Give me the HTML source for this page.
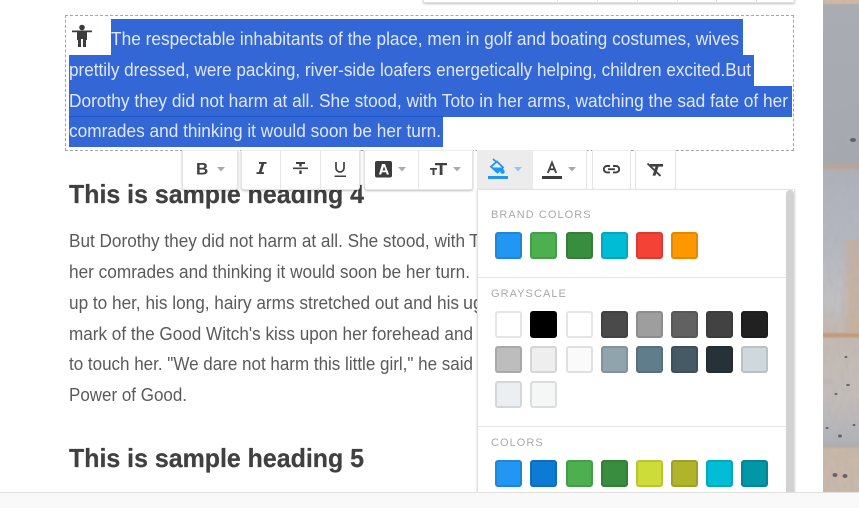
<!DOCTYPE html>
<html><head><meta charset="utf-8"><style>
html,body{margin:0;padding:0;background:#fff;width:859px;height:508px;overflow:hidden;font-family:"Liberation Sans",sans-serif}
.a{position:absolute;box-sizing:border-box}
svg.page{position:absolute;left:0;top:0}
.g{position:absolute;top:150px;height:40px;background:#fff;border:1px solid #e4e4e4;border-top-color:#eee;border-radius:0 0 3px 3px;box-sizing:border-box}
.sh{box-shadow:0 1px 2px rgba(0,0,0,.25)}
.s{position:absolute;width:27px;height:27px;border-radius:3px;box-sizing:border-box;border:2px solid rgba(0,0,0,.1)}
.l{position:absolute;left:491px;font-size:11px;letter-spacing:1.05px;color:#a9a9a9;line-height:12px}
.d{position:absolute;width:1px;top:151px;height:38px;background:#e6e6e6}
</style></head><body>
<div class="a" style="left:823px;top:0;width:36px;height:492px;background:linear-gradient(180deg,#d1b8a3 0,#d1b8a3 3px,#a9acb3 5px,#a6a8af 163px,#bba594 165px,#bba594 168px,#afb1ba 171px,#b6b8c1 250px,#c0bfc2 300px,#c4b8ae 332px,#c49a78 334px,#c49a78 336px,#c4bab2 339px,#c3bcb8 400px,#b2b3b8 440px,#b0aca8 446px,#c9b7a7 449px,#cab8a8 492px)"></div>
<div class="a" style="left:823px;top:240px;width:36px;height:94px;background:linear-gradient(90deg,rgba(205,170,140,0) 50%,rgba(205,170,140,.55) 75%,rgba(205,170,140,.6))"></div>
<svg class="page" width="859" height="492" style="left:0;top:0" xmlns="http://www.w3.org/2000/svg">
<filter id="n" x="0" y="0" width="100%" height="100%"><feTurbulence type="fractalNoise" baseFrequency="0.22 0.09" numOctaves="3" seed="4"/><feColorMatrix values="0 0 0 0 .4 0 0 0 0 .41 0 0 0 0 .45 0 0 0 .5 -.17"/></filter>
<rect x="823" y="0" width="36" height="492" filter="url(#n)"/>
<g fill="#4a484f" opacity=".75">
<ellipse cx="853" cy="140" rx="3" ry="2"/><ellipse cx="835" cy="475" rx="2.500" ry="2"/><ellipse cx="845" cy="476" rx="2.500" ry="2"/>
<ellipse cx="840" cy="436" rx="2" ry="1.500"/><ellipse cx="848" cy="385" rx="2" ry="1"/><ellipse cx="846" cy="357" rx="1.500" ry="1"/><ellipse cx="854" cy="425" rx="1.500" ry="1"/><ellipse cx="827" cy="428" rx="1.500" ry="1"/><ellipse cx="836" cy="394" rx="1.500" ry="1"/>
</g>
</svg>

<div class="a" style="left:423px;top:-4px;width:372px;height:7px;background:#fff;border:1px solid #e2e2e2;border-radius:2px;box-shadow:0 1px 2px rgba(0,0,0,.25)"></div>
<div class="a" style="left:557px;top:0;width:1px;height:3px;background:#e2e2e2"></div>
<div class="a" style="left:597px;top:0;width:1px;height:3px;background:#e2e2e2"></div>
<div class="a" style="left:637px;top:0;width:1px;height:3px;background:#e2e2e2"></div>
<div class="a" style="left:677px;top:0;width:1px;height:3px;background:#e2e2e2"></div>
<div class="a" style="left:716px;top:0;width:1px;height:3px;background:#e2e2e2"></div>
<div class="a" style="left:756px;top:0;width:1px;height:3px;background:#e2e2e2"></div>
<div class="a" style="left:65px;top:15px;width:729px;height:136px;border:1px dashed #a6a6a6"></div>
<div class="a" style="left:111px;top:19px;width:632px;height:36px;background:#3367d6"></div>
<div class="a" style="left:69px;top:55px;width:685px;height:31px;background:#3367d6"></div>
<div class="a" style="left:69px;top:86px;width:723px;height:31px;background:#3367d6"></div>
<div class="a" style="left:69px;top:116px;width:374px;height:31px;background:#3367d6;border-top:1px solid #1f56c9"></div>

<svg class="page" width="859" height="508" xmlns="http://www.w3.org/2000/svg" font-family="Liberation Sans, sans-serif">
<g font-size="18" fill="#e0e7f9">
<text x="111" y="45" textLength="628" lengthAdjust="spacingAndGlyphs">The respectable inhabitants of the place, men in golf and boating costumes, wives</text>
<text x="69" y="76" textLength="682" lengthAdjust="spacingAndGlyphs">prettily dressed, were packing, river-side loafers energetically helping, children excited.But</text>
<text x="69" y="107" textLength="719" lengthAdjust="spacingAndGlyphs">Dorothy they did not harm at all. She stood, with Toto in her arms, watching the sad fate of her</text>
<text x="69" y="137" textLength="372" lengthAdjust="spacingAndGlyphs">comrades and thinking it would soon be her turn.</text>
</g>
<g font-size="18" fill="#5a5a5a">
<text x="69" y="247" textLength="396" lengthAdjust="spacingAndGlyphs">But Dorothy they did not harm at all. She stood, with</text>
<text x="469" y="247">T</text>
<text x="69" y="278" textLength="401" lengthAdjust="spacingAndGlyphs">her comrades and thinking it would soon be her turn.</text>
<text x="69" y="309" textLength="390" lengthAdjust="spacingAndGlyphs">up to her, his long, hairy arms stretched out and his</text>
<text x="463" y="309">ug</text>
<text x="69" y="340" textLength="404" lengthAdjust="spacingAndGlyphs">mark of the Good Witch's kiss upon her forehead and</text>
<text x="69" y="370" textLength="404" lengthAdjust="spacingAndGlyphs">to touch her. "We dare not harm this little girl," he said</text>
<text x="69" y="401" textLength="118" lengthAdjust="spacingAndGlyphs">Power of Good.</text>
</g>
<g font-size="26" font-weight="700" fill="#404040" stroke="#404040" stroke-width=".25">
<text x="69" y="203" textLength="295" lengthAdjust="spacingAndGlyphs">This is sample heading 4</text>
<text x="69" y="467" textLength="295" lengthAdjust="spacingAndGlyphs">This is sample heading 5</text>
</g>
<circle cx="82" cy="27.500" r="2.800" fill="#3c3c3c"/>
<path fill="#3c3c3c" d="M72 30.500h20v1.700h-5v7.800h-1v7h-3v-8h-2v8h-3v-7h-1v-7.800h-5z"/>
</svg>

<div class="g sh" style="left:182px;width:56px"></div>
<div class="g sh" style="left:241px;width:119px"></div>
<div class="g sh" style="left:364px;width:109px"></div>
<div class="g" style="left:477px;width:110px"></div>
<div class="a" style="left:477px;top:150px;width:56px;height:40px;background:#ececec"></div>
<div class="g" style="left:592px;width:39px"></div>
<div class="g" style="left:635px;width:41px"></div>
<div class="d" style="left:280px"></div><div class="d" style="left:320px"></div><div class="d" style="left:418px"></div>

<div class="a" style="left:477px;top:189px;width:318px;height:303px;background:#fff;border:1px solid #e2e2e2;border-bottom:0;box-shadow:0 1px 2px rgba(0,0,0,.2)"></div>
<div class="a" style="left:786px;top:190px;width:8px;height:302px;background:#d2d2d2;border-radius:4px 4px 0 0"></div>
<div class="a" style="left:478px;top:277px;width:308px;height:1px;background:#e6e6e6"></div>
<div class="a" style="left:478px;top:426px;width:308px;height:1px;background:#e6e6e6"></div>
<div class="l" style="top:209px">BRAND COLORS</div>
<div class="l" style="top:288px">GRAYSCALE</div>
<div class="l" style="top:437px">COLORS</div>

<div class="s" style="left:495px;top:232px;background:#2196f3"></div>
<div class="s" style="left:530px;top:232px;background:#4caf50"></div>
<div class="s" style="left:566px;top:232px;background:#388e3c"></div>
<div class="s" style="left:601px;top:232px;background:#00bcd4"></div>
<div class="s" style="left:636px;top:232px;background:#f44336"></div>
<div class="s" style="left:671px;top:232px;background:#ff9800"></div>

<div class="s" style="left:495px;top:311px;background:#fff"></div>
<div class="s" style="left:530px;top:311px;background:#000"></div>
<div class="s" style="left:566px;top:311px;background:#fff"></div>
<div class="s" style="left:601px;top:311px;background:#4a4a4a"></div>
<div class="s" style="left:636px;top:311px;background:#9e9e9e"></div>
<div class="s" style="left:671px;top:311px;background:#616161"></div>
<div class="s" style="left:706px;top:311px;background:#424242"></div>
<div class="s" style="left:741px;top:311px;background:#212121"></div>

<div class="s" style="left:495px;top:346px;background:#bdbdbd"></div>
<div class="s" style="left:530px;top:346px;background:#eee"></div>
<div class="s" style="left:566px;top:346px;background:#fafafa"></div>
<div class="s" style="left:601px;top:346px;background:#90a4ae"></div>
<div class="s" style="left:636px;top:346px;background:#607d8b"></div>
<div class="s" style="left:671px;top:346px;background:#455a64"></div>
<div class="s" style="left:706px;top:346px;background:#263238"></div>
<div class="s" style="left:741px;top:346px;background:#cfd8dc"></div>

<div class="s" style="left:495px;top:381px;background:#eceff1"></div>
<div class="s" style="left:530px;top:381px;background:#f5f7f6"></div>

<div class="s" style="left:495px;top:460px;background:#2196f3"></div>
<div class="s" style="left:530px;top:460px;background:#0d7bd4"></div>
<div class="s" style="left:566px;top:460px;background:#4caf50"></div>
<div class="s" style="left:601px;top:460px;background:#388e3c"></div>
<div class="s" style="left:636px;top:460px;background:#cddc39"></div>
<div class="s" style="left:671px;top:460px;background:#afb42b"></div>
<div class="s" style="left:706px;top:460px;background:#00bcd4"></div>
<div class="s" style="left:741px;top:460px;background:#0097a7"></div>

<svg class="page" width="859" height="508" xmlns="http://www.w3.org/2000/svg" font-family="Liberation Sans, sans-serif">
<text x="196" y="174.500" font-size="17" font-weight="700" fill="#404040">B</text>
<path fill="#aaa" d="M217 167h8l-4 4.500zM398 167h8l-4 4.500zM453 167h8l-4 4.500zM568 167h8l-4 4.500z"/>
<path fill="#8fc6f5" d="M514 167h8l-4 4.500z"/>
<path fill="#404040" d="M259 162h7.500v1.900h-2.300l-2.600 8.200h2.300v1.900H256.500v-1.900h2.300l2.600-8.200H259z"/>
<path fill="#404040" d="M293 167.500h15v1.600h-15zM296 162h9v2h-3.300v2.500h-2.400V164H296zM299.300 170.500h2.400v3.500h-2.400z"/>
<path fill="none" stroke="#404040" stroke-width="1.700" d="M336 162v6a4 4 0 0 0 8 0v-6"/><path fill="#404040" d="M334.500 175.500h11.500v1.500h-11.500z"/>
<rect x="375" y="161" width="17" height="16.500" rx="2" fill="#3c3c3c"/><path fill="#fff" d="M382 164h3l4 10.500h-2.200l-.8-2.300h-4l-.8 2.300H379zm.6 6.400h2.800l-1.400-4z"/>
<path fill="#404040" d="M435 163h12v2.200h-4.500V175h-2.800v-9.800H435zM430 168h7v1.800h-2.500V175h-2v-5.200H430z"/>
<path fill="none" stroke="#2196f3" stroke-width="1.800" d="M493 159l3.500 3M497 161.500l6 6-5.500 5-6.500-5.800z"/>
<path fill="#2196f3" d="M491 167.500h12l-5.500 5zM502.500 168c1.400 1.800 2.200 2.700 2.200 3.700a2.200 2.200 0 0 1-4.400 0c0-1 .8-1.900 2.200-3.700z"/>
<rect x="488" y="176" width="20" height="3" fill="#2196f3"/>
<path fill="none" stroke="#404040" stroke-width="1.800" d="M547.800 173l4.200-10.500 4.200 10.500M549.300 169.300h5.400"/>
<rect x="542" y="176" width="20" height="3" fill="#3c3c3c"/>
<path fill="none" stroke="#404040" stroke-width="1.900" d="M610 166h-3a3.200 3.200 0 0 0 0 6.400h3M613 166h3a3.200 3.200 0 0 1 0 6.400h-3"/>
<path fill="#404040" d="M608 168.300h7v1.800h-7z"/>
<path fill="#404040" d="M650 164h13v2.600h-4.500l-3 9h-3l3-9H650z"/>
<path stroke="#404040" stroke-width="1.900" d="M647.500 163.500l13 12.500"/>
</svg>

<div class="a" style="left:0;top:492px;width:859px;height:16px;background:#f9f9f9;border-top:1px solid #e0e0e0"></div>
</body></html>
